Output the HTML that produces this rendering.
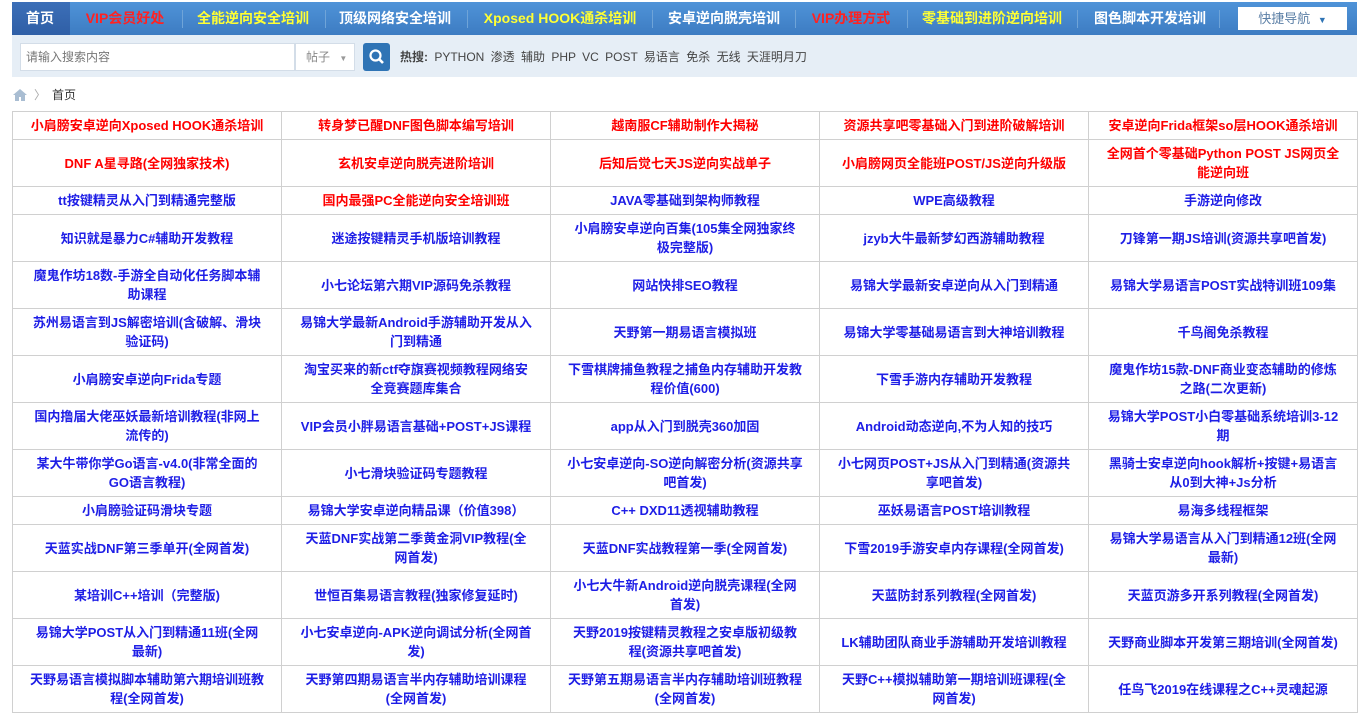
<!DOCTYPE html>
<html><head><meta charset="utf-8"><style>
*{margin:0;padding:0;box-sizing:border-box}
body{width:1362px;height:712px;overflow:hidden;background:#fff;font-family:"Liberation Sans","Noto Sans CJK SC",sans-serif;position:relative}
.nav{position:absolute;left:12px;top:2px;width:1345px;height:33px;background:linear-gradient(#4f93d8,#3d7cc2)}
.nav .it{position:absolute;top:0;height:33px;line-height:33px;font-size:14px;font-weight:bold;color:#fff;white-space:nowrap;transform:translateX(-50%)}
.sep{position:absolute;top:8px;width:1px;height:18px;background:#6fa4d8}
.home{position:absolute;left:0;top:0;width:58px;height:33px;background:linear-gradient(#3c6fb8,#2f5fa6)}
.qn{position:absolute;left:1226px;top:5px;width:109px;height:23px;background:#fff;color:#5b7fa6;font-size:13px;line-height:23px;text-align:center}
.ar{font-size:9px;color:#2f74b5;margin-left:4px}
.sb{position:absolute;left:12px;top:35px;width:1345px;height:42px;background:#e6eef6}
.inp{position:absolute;left:8px;top:8px;width:275px;height:28px;background:#fff;border:1px solid #d3dde8;font-size:12px;color:#777;line-height:26px;padding-left:5px}
.dd{position:absolute;left:283px;top:8px;width:60px;height:28px;background:#fff;border:1px solid #d3dde8;font-size:12px;color:#888;line-height:26px;padding-left:10px}
.btn{position:absolute;left:351px;top:8px;width:27px;height:28px;background:#2f74b5;border-radius:3px}
.hot{position:absolute;left:388px;top:8px;line-height:28px;font-size:12px;color:#444;word-spacing:3px}
.bc{position:absolute;left:12px;top:86px;font-size:12px;color:#333}
table{position:absolute;left:12px;top:111px;width:1346px;border-collapse:collapse;table-layout:fixed}
td{border:1px solid #d0d0d0;text-align:center;font-size:13px;font-weight:bold;line-height:19px;padding:4px 2px;white-space:nowrap}
td{color:#1e1ee6}
.r{color:#f00}
tr.s td{height:28px}
tr.d td{height:47px}
</style></head><body>
<div class="nav">
<div class="home"></div>
<span class="it" style="left:28px">首页</span>
<span class="it" style="left:113px;color:#f22">VIP会员好处</span>
<div class="sep" style="left:170px"></div>
<span class="it" style="left:241px;color:#ff3">全能逆向安全培训</span>
<div class="sep" style="left:313px"></div>
<span class="it" style="left:383px">顶级网络安全培训</span>
<div class="sep" style="left:455px"></div>
<span class="it" style="left:548px;color:#ff3">Xposed HOOK通杀培训</span>
<div class="sep" style="left:640px"></div>
<span class="it" style="left:712px">安卓逆向脱壳培训</span>
<div class="sep" style="left:783px"></div>
<span class="it" style="left:839px;color:#f22">VIP办理方式</span>
<div class="sep" style="left:895px"></div>
<span class="it" style="left:980px;color:#ff3">零基础到进阶逆向培训</span>
<div class="sep" style="left:1065px"></div>
<span class="it" style="left:1138px">图色脚本开发培训</span>
<div class="sep" style="left:1207px"></div>
<div class="qn">快捷导航 <span class="ar">▼</span></div>
</div>
<div class="sb">
<div class="inp">请输入搜索内容</div>
<div class="dd">帖子 <span style="font-size:8px;color:#999;margin-left:6px">▼</span></div>
<div class="btn"><svg width="27" height="28"><circle cx="12.5" cy="12.5" r="5" stroke="#fff" stroke-width="2.2" fill="none"/><path d="M16 16l4 4" stroke="#fff" stroke-width="2.6"/></svg></div>
<div class="hot"><b>热搜:</b> PYTHON 渗透 辅助 PHP VC POST 易语言 免杀 无线 天涯明月刀</div>
</div>
<div class="bc"><svg width="16" height="13" style="vertical-align:-2px"><path d="M1 7L8 1l7 6h-2v6H9V9H7v4H3V7z" fill="#a9bdd2"/></svg><span style="color:#aaa;margin:0 6px">〉</span>首页</div>
<table>
<tr class="s"><td class="r">小肩膀安卓逆向Xposed HOOK通杀培训</td><td class="r">转身梦已醒DNF图色脚本编写培训</td><td class="r">越南服CF辅助制作大揭秘</td><td class="r">资源共享吧零基础入门到进阶破解培训</td><td class="r">安卓逆向Frida框架so层HOOK通杀培训</td></tr>
<tr class="d"><td class="r">DNF A星寻路(全网独家技术)</td><td class="r">玄机安卓逆向脱壳进阶培训</td><td class="r">后知后觉七天JS逆向实战单子</td><td class="r">小肩膀网页全能班POST/JS逆向升级版</td><td class="r">全网首个零基础Python POST JS网页全<br>能逆向班</td></tr>
<tr class="s"><td>tt按键精灵从入门到精通完整版</td><td class="r">国内最强PC全能逆向安全培训班</td><td>JAVA零基础到架构师教程</td><td>WPE高级教程</td><td>手游逆向修改</td></tr>
<tr class="d"><td>知识就是暴力C#辅助开发教程</td><td>迷途按键精灵手机版培训教程</td><td>小肩膀安卓逆向百集(105集全网独家终<br>极完整版)</td><td>jzyb大牛最新梦幻西游辅助教程</td><td>刀锋第一期JS培训(资源共享吧首发)</td></tr>
<tr class="d"><td>魔鬼作坊18数-手游全自动化任务脚本辅<br>助课程</td><td>小七论坛第六期VIP源码免杀教程</td><td>网站快排SEO教程</td><td>易锦大学最新安卓逆向从入门到精通</td><td>易锦大学易语言POST实战特训班109集</td></tr>
<tr class="d"><td>苏州易语言到JS解密培训(含破解、滑块<br>验证码)</td><td>易锦大学最新Android手游辅助开发从入<br>门到精通</td><td>天野第一期易语言模拟班</td><td>易锦大学零基础易语言到大神培训教程</td><td>千鸟阁免杀教程</td></tr>
<tr class="d"><td>小肩膀安卓逆向Frida专题</td><td>淘宝买来的新ctf夺旗赛视频教程网络安<br>全竞赛题库集合</td><td>下雪棋牌捕鱼教程之捕鱼内存辅助开发教<br>程价值(600)</td><td>下雪手游内存辅助开发教程</td><td>魔鬼作坊15款-DNF商业变态辅助的修炼<br>之路(二次更新)</td></tr>
<tr class="d"><td>国内撸届大佬巫妖最新培训教程(非网上<br>流传的)</td><td>VIP会员小胖易语言基础+POST+JS课程</td><td>app从入门到脱壳360加固</td><td>Android动态逆向,不为人知的技巧</td><td>易锦大学POST小白零基础系统培训3-12<br>期</td></tr>
<tr class="d"><td>某大牛带你学Go语言-v4.0(非常全面的<br>GO语言教程)</td><td>小七滑块验证码专题教程</td><td>小七安卓逆向-SO逆向解密分析(资源共享<br>吧首发)</td><td>小七网页POST+JS从入门到精通(资源共<br>享吧首发)</td><td>黑骑士安卓逆向hook解析+按键+易语言<br>从0到大神+Js分析</td></tr>
<tr class="s"><td>小肩膀验证码滑块专题</td><td>易锦大学安卓逆向精品课（价值398）</td><td>C++ DXD11透视辅助教程</td><td>巫妖易语言POST培训教程</td><td>易海多线程框架</td></tr>
<tr class="d"><td>天蓝实战DNF第三季单开(全网首发)</td><td>天蓝DNF实战第二季黄金洞VIP教程(全<br>网首发)</td><td>天蓝DNF实战教程第一季(全网首发)</td><td>下雪2019手游安卓内存课程(全网首发)</td><td>易锦大学易语言从入门到精通12班(全网<br>最新)</td></tr>
<tr class="d"><td>某培训C++培训（完整版)</td><td>世恒百集易语言教程(独家修复延时)</td><td>小七大牛新Android逆向脱壳课程(全网<br>首发)</td><td>天蓝防封系列教程(全网首发)</td><td>天蓝页游多开系列教程(全网首发)</td></tr>
<tr class="d"><td>易锦大学POST从入门到精通11班(全网<br>最新)</td><td>小七安卓逆向-APK逆向调试分析(全网首<br>发)</td><td>天野2019按键精灵教程之安卓版初级教<br>程(资源共享吧首发)</td><td>LK辅助团队商业手游辅助开发培训教程</td><td>天野商业脚本开发第三期培训(全网首发)</td></tr>
<tr class="d"><td>天野易语言模拟脚本辅助第六期培训班教<br>程(全网首发)</td><td>天野第四期易语言半内存辅助培训课程<br>(全网首发)</td><td>天野第五期易语言半内存辅助培训班教程<br>(全网首发)</td><td>天野C++模拟辅助第一期培训班课程(全<br>网首发)</td><td>任鸟飞2019在线课程之C++灵魂起源</td></tr>
</table>
</body></html>
